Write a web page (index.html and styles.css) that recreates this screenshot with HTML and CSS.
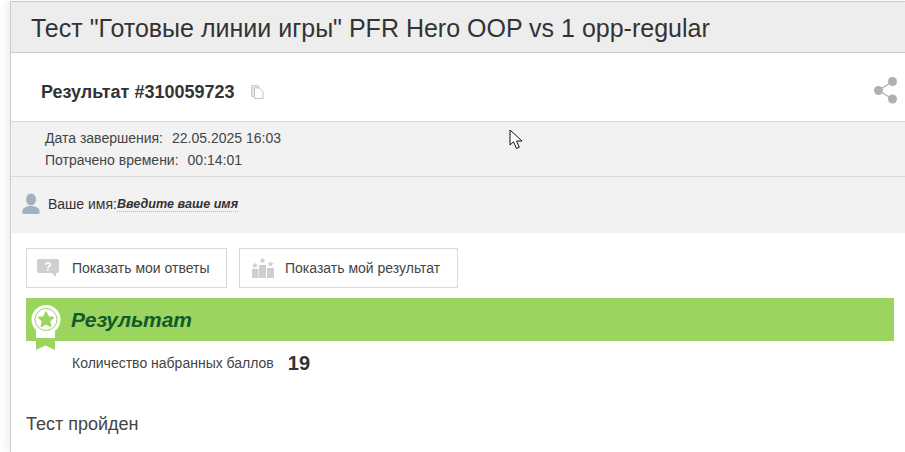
FILE: index.html
```html
<!DOCTYPE html>
<html lang="ru">
<head>
    <meta charset="UTF-8">
    <title>Результат теста</title>
    <link rel="stylesheet" href="styles.css">
</head>
<body>
    <div class="page">
        <h1 class="test-title">Тест "Готовые линии игры" PFR Hero OOP vs 1 opp-regular</h1>

        <div class="result-head">
            <h2 class="result-id">Результат #310059723</h2>
            <svg class="copy-icon" width="13" height="14" viewBox="0 0 13 14">
                <path d="M0.5 0.5H7L8 1.5V2.5H3.5V11.5H0.5Z" fill="#e6e6e6" stroke="#ccc"/>
                <path d="M3.5 3H8.5L12 6.5V13.5H3.5Z" fill="#fff" stroke="#c4c4c4"/>
            </svg>
            <svg class="share-icon" width="24" height="28" viewBox="0 0 24 28">
                <path d="M5.500 14.500L19.500 5.500M5.500 14.500L19.500 23" stroke="#b0b0b0" stroke-width="1.400"/>
                <circle cx="5.500" cy="14.500" r="4.500" fill="#b0b0b0"/>
                <circle cx="19.500" cy="5.500" r="4.500" fill="#b0b0b0"/>
                <circle cx="19.500" cy="23" r="4.500" fill="#b0b0b0"/>
            </svg>
        </div>

        <div class="meta">
            <p>Дата завершения:<span class="meta-value">22.05.2025 16:03</span></p>
            <p>Потрачено времени:<span class="meta-value">00:14:01</span></p>
            <svg class="cursor" width="15" height="21" viewBox="0 0 15 21">
                <path d="M1 1V16L4.500 12.800L7.500 19.500L10.300 18.300L7.500 12H13Z" fill="#fff" stroke="#111" stroke-width="1"/>
            </svg>
        </div>

        <div class="user-row">
            <svg class="user-icon" width="18" height="22" viewBox="0 0 18 22">
                <ellipse cx="9" cy="6.500" rx="5" ry="6" fill="#a3b1bf"/>
                <path d="M0.500 21V17.500C0.500 15 4 14 6.500 13H11.500C14 14 17.500 15 17.500 17.500V21Z" fill="#a3b1bf"/>
            </svg>
            <span>Ваше имя:</span><span class="user-name">Введите ваше имя</span>
        </div>

        <div class="content">
            <div class="tabs">
                <div class="tab tab-answers">
                    <svg width="24" height="20" viewBox="0 0 24 20">
                        <path d="M3 1H21Q23 1 23 3V13Q23 15 21 15H20V19L15.500 15H3Q1 15 1 13V3Q1 1 3 1Z" fill="#cfcfcf"/>
                        <text x="12" y="12.500" class="tab-mark">?</text>
                    </svg>
                    <span>Показать мои ответы</span>
                </div>
                <div class="tab tab-result">
                    <svg width="24" height="22" viewBox="0 0 24 22">
                        <rect x="1" y="12" width="6.500" height="9" fill="#cfcfcf"/>
                        <rect x="8" y="8" width="7" height="13" fill="#cfcfcf"/>
                        <rect x="16" y="11" width="7" height="10" fill="#cfcfcf"/>
                        <path d="M4 5.500L5 7.500H7L5.500 9L6 11L4 10L2 11L2.500 9L1 7.500H3Z" fill="#cfcfcf"/>
                        <path d="M11.500 0.500L12.500 2.500H14.500L13 4L13.500 6L11.500 5L9.500 6L10 4L8.500 2.500H10.500Z" fill="#cfcfcf"/>
                        <path d="M19.500 4L20.500 6H22.500L21 7.500L21.500 9.500L19.500 8.500L17.500 9.500L18 7.500L16.500 6H18.500Z" fill="#cfcfcf"/>
                    </svg>
                    <span>Показать мой результат</span>
                </div>
            </div>

            <div class="result-bar">
                <svg class="badge" width="30" height="46" viewBox="0 0 30 46">
                    <path d="M5 30H24V45L14.500 40.500L5 45Z" fill="#9bd45f"/>
                    <rect x="5" y="24" width="19" height="9" fill="#fff"/>
                    <circle cx="15" cy="14.500" r="14.500" fill="#fff"/>
                    <circle cx="15" cy="14.500" r="11" fill="#fff" stroke="#9bd45f" stroke-width="1"/>
                    <path d="M15 6.500L17.400 11.800L23 12.400L18.800 16.200L20 21.800L15 19L10 21.800L11.200 16.200L7 12.400L12.600 11.800Z" fill="#9bd45f" stroke="#9bd45f" stroke-linejoin="round"/>
                </svg>
                <h3>Результат</h3>
            </div>

            <div class="score">
                <span>Количество набранных баллов</span>
                <b>19</b>
            </div>

            <p class="passed">Тест пройден</p>
        </div>
    </div>
</body>
</html>
```

FILE: styles.css
```css
html, body {
    height: 100%;
}
body {
    margin: 0;
    font-family: "Liberation Sans", Arial, sans-serif;
    color: #333;
    background-color: #fff;
    overflow: hidden;
}
.page {
    margin: 1px 0 0 10px;
    height: 451px;
    box-sizing: border-box;
    border-top: 1px solid #ccc;
    border-left: 1px solid #ccc;
    box-shadow: -4px 0 6px rgba(0, 0, 0, 0.06);
}
.test-title {
    margin: 0;
    height: 50px;
    padding-left: 20px;
    line-height: 52px;
    font-size: 25px;
    font-weight: normal;
    color: #333;
    background-color: #ededed;
    border-bottom: 1px solid #ccc;
}
.result-head {
    display: flex;
    align-items: center;
    box-sizing: content-box;
    height: 58px;
    padding: 10px 8px 0 30px;
    border-bottom: 1px solid #d9d9d9;
}
.result-id {
    margin: 0;
    font-size: 18px;
    font-weight: bold;
    color: #333;
}
.copy-icon {
    margin: -1px 0 0 16px;
}
.share-icon {
    margin: -4px 0 0 auto;
}
.meta {
    position: relative;
    box-sizing: border-box;
    height: 55px;
    padding: 5px 0 0 34px;
    font-size: 14px;
    color: #444;
    background-color: #f2f2f2;
    border-bottom: 1px solid #d9d9d9;
}
.meta p {
    margin: 0;
    line-height: 22px;
}
.meta-value {
    margin-left: 9px;
}
.cursor {
    position: absolute;
    left: 498px;
    top: 7px;
}
.user-row {
    display: flex;
    align-items: center;
    height: 56px;
    padding: 0 0 2px 11px;
    box-sizing: border-box;
    font-size: 14px;
    background-color: #f2f2f2;
}
.user-icon {
    margin-right: 8px;
}
.user-name {
    font-size: 12.6px;
    font-weight: bold;
    font-style: italic;
    border-bottom: 1px dotted #bbb;
}
.content {
    padding: 15px 11px 0 15px;
}
.tabs {
    display: flex;
    gap: 12px;
}
.tab {
    display: flex;
    align-items: center;
    box-sizing: border-box;
    height: 40px;
    font-size: 14px;
    color: #444;
    background-color: #fff;
    border: 1px solid #d9d9d9;
}
.tab-answers {
    width: 201px;
    padding-left: 9px;
    gap: 12px;
}
.tab-result {
    width: 219px;
    padding-left: 11px;
    gap: 10px;
}
.tab-mark {
    font-family: "Liberation Sans", Arial, sans-serif;
    font-size: 12px;
    font-weight: bold;
    fill: #fff;
    text-anchor: middle;
}
.result-bar {
    position: relative;
    height: 43px;
    margin-top: 10px;
    padding-left: 45px;
    background-color: #9bd45f;
}
.result-bar h3 {
    margin: 0;
    line-height: 43px;
    font-size: 21px;
    font-weight: bold;
    font-style: italic;
    color: #14592b;
}
.badge {
    position: absolute;
    left: 5px;
    top: 7px;
}
.score {
    display: flex;
    align-items: center;
    height: 44px;
    padding-left: 46px;
    font-size: 14px;
    color: #444;
}
.score b {
    margin-left: 14px;
    font-size: 20px;
    color: #333;
}
.passed {
    margin: 29px 0 0;
    font-size: 18px;
    color: #444;
}
```
